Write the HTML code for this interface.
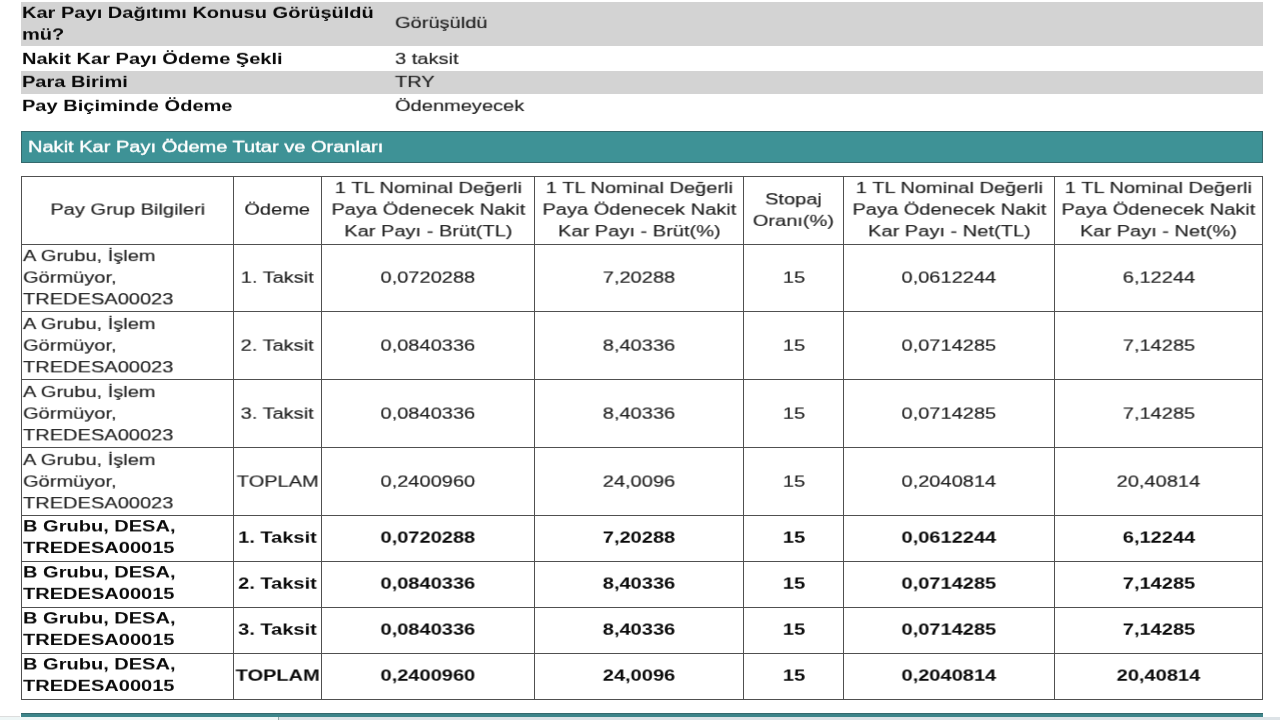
<!DOCTYPE html>
<html><head><meta charset="utf-8"><style>
html,body{margin:0;padding:0;background:#fff;}
body{width:1280px;height:720px;overflow:hidden;position:relative;font-family:"Liberation Sans",sans-serif;font-size:16px;color:#222;}
.bg{position:absolute;}
body{-webkit-font-smoothing:antialiased;}
.tl,.t{will-change:transform;-webkit-text-stroke:0.15px currentColor;}
.tl{position:absolute;white-space:nowrap;transform:scale(1.2525,0.94);}
.cell{position:absolute;display:flex;align-items:center;}
.t{white-space:nowrap;line-height:22.798px;transform:scale(1.2525,0.94);}
</style></head><body>
<div class="bg" style="left:20.5px;top:2px;width:1242.5px;height:44px;background:#d3d3d3"></div>
<div class="bg" style="left:20.5px;top:71px;width:1242.5px;height:23px;background:#d3d3d3"></div>
<div class="tl " style="left:21.9px;top:0.61px;line-height:23.298px;transform-origin:0 17.193px;font-weight:bold;-webkit-text-stroke:0;color:#0a0a0a">Kar Payı Dağıtımı Konusu Görüşüldü<br>mü?</div>
<div class="tl " style="left:394.6px;top:11.96px;line-height:22.798px;transform-origin:0 16.943px;color:#222">Görüşüldü</div>
<div class="tl " style="left:21.9px;top:48.36px;line-height:22.798px;transform-origin:0 16.943px;font-weight:bold;-webkit-text-stroke:0;color:#0a0a0a">Nakit Kar Payı Ödeme Şekli</div>
<div class="tl " style="left:394.6px;top:48.36px;line-height:22.798px;transform-origin:0 16.943px;color:#222">3 taksit</div>
<div class="tl " style="left:21.9px;top:70.96px;line-height:22.798px;transform-origin:0 16.943px;font-weight:bold;-webkit-text-stroke:0;color:#0a0a0a">Para Birimi</div>
<div class="tl " style="left:394.6px;top:70.96px;line-height:22.798px;transform-origin:0 16.943px;color:#222">TRY</div>
<div class="tl " style="left:21.9px;top:94.66px;line-height:22.798px;transform-origin:0 16.943px;font-weight:bold;-webkit-text-stroke:0;color:#0a0a0a">Pay Biçiminde Ödeme</div>
<div class="tl " style="left:394.6px;top:94.66px;line-height:22.798px;transform-origin:0 16.943px;color:#222">Ödenmeyecek</div>
<div class="bg" style="left:20.5px;top:131px;width:1242.5px;height:31.5px;background:#3e9296;box-shadow:inset 0 0 0 1px #35696d"></div>
<div class="tl " style="left:27.8px;top:135.96px;line-height:22.798px;transform-origin:0 16.943px;color:#fff;-webkit-text-stroke:0.4px #fff">Nakit Kar Payı Ödeme Tutar ve Oranları</div>
<div class="bg" style="left:21px;top:176px;width:1px;height:524px;background:#505050"></div>
<div class="bg" style="left:233px;top:176px;width:1px;height:524px;background:#505050"></div>
<div class="bg" style="left:321px;top:176px;width:1px;height:524px;background:#505050"></div>
<div class="bg" style="left:534px;top:176px;width:1px;height:524px;background:#505050"></div>
<div class="bg" style="left:743px;top:176px;width:1px;height:524px;background:#505050"></div>
<div class="bg" style="left:843px;top:176px;width:1px;height:524px;background:#505050"></div>
<div class="bg" style="left:1054px;top:176px;width:1px;height:524px;background:#505050"></div>
<div class="bg" style="left:1262px;top:176px;width:1px;height:524px;background:#505050"></div>
<div class="bg" style="left:21px;top:176px;width:1242px;height:1px;background:#505050"></div>
<div class="bg" style="left:21px;top:244px;width:1242px;height:1px;background:#505050"></div>
<div class="bg" style="left:21px;top:311px;width:1242px;height:1px;background:#505050"></div>
<div class="bg" style="left:21px;top:379px;width:1242px;height:1px;background:#505050"></div>
<div class="bg" style="left:21px;top:447px;width:1242px;height:1px;background:#505050"></div>
<div class="bg" style="left:21px;top:515px;width:1242px;height:1px;background:#505050"></div>
<div class="bg" style="left:21px;top:561px;width:1242px;height:1px;background:#505050"></div>
<div class="bg" style="left:21px;top:607px;width:1242px;height:1px;background:#505050"></div>
<div class="bg" style="left:21px;top:653px;width:1242px;height:1px;background:#505050"></div>
<div class="bg" style="left:21px;top:699px;width:1242px;height:1px;background:#505050"></div>
<div class="cell" style="left:22.0px;top:177px;width:211px;height:67px;justify-content:center"><div class="t" style="text-align:center;transform-origin:50% 50%">Pay Grup Bilgileri</div></div>
<div class="cell" style="left:234.0px;top:177px;width:87px;height:67px;justify-content:center"><div class="t" style="text-align:center;transform-origin:50% 50%">Ödeme</div></div>
<div class="cell" style="left:322.0px;top:177px;width:212px;height:67px;justify-content:center"><div class="t" style="text-align:center;transform-origin:50% 50%">1 TL Nominal Değerli<br>Paya Ödenecek Nakit<br>Kar Payı - Brüt(TL)</div></div>
<div class="cell" style="left:535.0px;top:177px;width:208px;height:67px;justify-content:center"><div class="t" style="text-align:center;transform-origin:50% 50%">1 TL Nominal Değerli<br>Paya Ödenecek Nakit<br>Kar Payı - Brüt(%)</div></div>
<div class="cell" style="left:744.0px;top:177px;width:99px;height:67px;justify-content:center"><div class="t" style="text-align:center;transform-origin:50% 50%">Stopaj<br>Oranı(%)</div></div>
<div class="cell" style="left:844.0px;top:177px;width:210px;height:67px;justify-content:center"><div class="t" style="text-align:center;transform-origin:50% 50%">1 TL Nominal Değerli<br>Paya Ödenecek Nakit<br>Kar Payı - Net(TL)</div></div>
<div class="cell" style="left:1055.0px;top:177px;width:207px;height:67px;justify-content:center"><div class="t" style="text-align:center;transform-origin:50% 50%">1 TL Nominal Değerli<br>Paya Ödenecek Nakit<br>Kar Payı - Net(%)</div></div>
<div class="cell" style="left:23.0px;top:245.2px;width:211px;height:66.0px;justify-content:flex-start"><div class="t" style="text-align:left;transform-origin:0 50%">A Grubu, İşlem<br>Görmüyor,<br>TREDESA00023</div></div>
<div class="cell" style="left:234.0px;top:245.9px;width:87px;height:65.99999999999997px;justify-content:center"><div class="t" style="text-align:center;transform-origin:50% 50%">1. Taksit</div></div>
<div class="cell" style="left:322.0px;top:245.9px;width:212px;height:65.99999999999997px;justify-content:center"><div class="t" style="text-align:center;transform-origin:50% 50%">0,0720288</div></div>
<div class="cell" style="left:535.0px;top:245.9px;width:208px;height:65.99999999999997px;justify-content:center"><div class="t" style="text-align:center;transform-origin:50% 50%">7,20288</div></div>
<div class="cell" style="left:744.0px;top:245.9px;width:99px;height:65.99999999999997px;justify-content:center"><div class="t" style="text-align:center;transform-origin:50% 50%">15</div></div>
<div class="cell" style="left:844.0px;top:245.9px;width:210px;height:65.99999999999997px;justify-content:center"><div class="t" style="text-align:center;transform-origin:50% 50%">0,0612244</div></div>
<div class="cell" style="left:1055.0px;top:245.9px;width:207px;height:65.99999999999997px;justify-content:center"><div class="t" style="text-align:center;transform-origin:50% 50%">6,12244</div></div>
<div class="cell" style="left:23.0px;top:312.2px;width:211px;height:67.0px;justify-content:flex-start"><div class="t" style="text-align:left;transform-origin:0 50%">A Grubu, İşlem<br>Görmüyor,<br>TREDESA00023</div></div>
<div class="cell" style="left:234.0px;top:312.9px;width:87px;height:67.0px;justify-content:center"><div class="t" style="text-align:center;transform-origin:50% 50%">2. Taksit</div></div>
<div class="cell" style="left:322.0px;top:312.9px;width:212px;height:67.0px;justify-content:center"><div class="t" style="text-align:center;transform-origin:50% 50%">0,0840336</div></div>
<div class="cell" style="left:535.0px;top:312.9px;width:208px;height:67.0px;justify-content:center"><div class="t" style="text-align:center;transform-origin:50% 50%">8,40336</div></div>
<div class="cell" style="left:744.0px;top:312.9px;width:99px;height:67.0px;justify-content:center"><div class="t" style="text-align:center;transform-origin:50% 50%">15</div></div>
<div class="cell" style="left:844.0px;top:312.9px;width:210px;height:67.0px;justify-content:center"><div class="t" style="text-align:center;transform-origin:50% 50%">0,0714285</div></div>
<div class="cell" style="left:1055.0px;top:312.9px;width:207px;height:67.0px;justify-content:center"><div class="t" style="text-align:center;transform-origin:50% 50%">7,14285</div></div>
<div class="cell" style="left:23.0px;top:380.2px;width:211px;height:67.0px;justify-content:flex-start"><div class="t" style="text-align:left;transform-origin:0 50%">A Grubu, İşlem<br>Görmüyor,<br>TREDESA00023</div></div>
<div class="cell" style="left:234.0px;top:380.9px;width:87px;height:67.0px;justify-content:center"><div class="t" style="text-align:center;transform-origin:50% 50%">3. Taksit</div></div>
<div class="cell" style="left:322.0px;top:380.9px;width:212px;height:67.0px;justify-content:center"><div class="t" style="text-align:center;transform-origin:50% 50%">0,0840336</div></div>
<div class="cell" style="left:535.0px;top:380.9px;width:208px;height:67.0px;justify-content:center"><div class="t" style="text-align:center;transform-origin:50% 50%">8,40336</div></div>
<div class="cell" style="left:744.0px;top:380.9px;width:99px;height:67.0px;justify-content:center"><div class="t" style="text-align:center;transform-origin:50% 50%">15</div></div>
<div class="cell" style="left:844.0px;top:380.9px;width:210px;height:67.0px;justify-content:center"><div class="t" style="text-align:center;transform-origin:50% 50%">0,0714285</div></div>
<div class="cell" style="left:1055.0px;top:380.9px;width:207px;height:67.0px;justify-content:center"><div class="t" style="text-align:center;transform-origin:50% 50%">7,14285</div></div>
<div class="cell" style="left:23.0px;top:448.2px;width:211px;height:67.00000000000006px;justify-content:flex-start"><div class="t" style="text-align:left;transform-origin:0 50%">A Grubu, İşlem<br>Görmüyor,<br>TREDESA00023</div></div>
<div class="cell" style="left:234.0px;top:448.9px;width:87px;height:67.0px;justify-content:center"><div class="t" style="text-align:center;transform-origin:50% 50%">TOPLAM</div></div>
<div class="cell" style="left:322.0px;top:448.9px;width:212px;height:67.0px;justify-content:center"><div class="t" style="text-align:center;transform-origin:50% 50%">0,2400960</div></div>
<div class="cell" style="left:535.0px;top:448.9px;width:208px;height:67.0px;justify-content:center"><div class="t" style="text-align:center;transform-origin:50% 50%">24,0096</div></div>
<div class="cell" style="left:744.0px;top:448.9px;width:99px;height:67.0px;justify-content:center"><div class="t" style="text-align:center;transform-origin:50% 50%">15</div></div>
<div class="cell" style="left:844.0px;top:448.9px;width:210px;height:67.0px;justify-content:center"><div class="t" style="text-align:center;transform-origin:50% 50%">0,2040814</div></div>
<div class="cell" style="left:1055.0px;top:448.9px;width:207px;height:67.0px;justify-content:center"><div class="t" style="text-align:center;transform-origin:50% 50%">20,40814</div></div>
<div class="cell" style="left:23.0px;top:515.7px;width:211px;height:45.0px;justify-content:flex-start"><div class="t" style="font-weight:bold;-webkit-text-stroke:0;color:#0a0a0a;text-align:left;transform-origin:0 50%">B Grubu, DESA,<br>TREDESA00015</div></div>
<div class="cell" style="left:234.0px;top:516.2px;width:87px;height:45.0px;justify-content:center"><div class="t" style="font-weight:bold;-webkit-text-stroke:0;color:#0a0a0a;text-align:center;transform-origin:50% 50%">1. Taksit</div></div>
<div class="cell" style="left:322.0px;top:516.2px;width:212px;height:45.0px;justify-content:center"><div class="t" style="font-weight:bold;-webkit-text-stroke:0;color:#0a0a0a;text-align:center;transform-origin:50% 50%">0,0720288</div></div>
<div class="cell" style="left:535.0px;top:516.2px;width:208px;height:45.0px;justify-content:center"><div class="t" style="font-weight:bold;-webkit-text-stroke:0;color:#0a0a0a;text-align:center;transform-origin:50% 50%">7,20288</div></div>
<div class="cell" style="left:744.0px;top:516.2px;width:99px;height:45.0px;justify-content:center"><div class="t" style="font-weight:bold;-webkit-text-stroke:0;color:#0a0a0a;text-align:center;transform-origin:50% 50%">15</div></div>
<div class="cell" style="left:844.0px;top:516.2px;width:210px;height:45.0px;justify-content:center"><div class="t" style="font-weight:bold;-webkit-text-stroke:0;color:#0a0a0a;text-align:center;transform-origin:50% 50%">0,0612244</div></div>
<div class="cell" style="left:1055.0px;top:516.2px;width:207px;height:45.0px;justify-content:center"><div class="t" style="font-weight:bold;-webkit-text-stroke:0;color:#0a0a0a;text-align:center;transform-origin:50% 50%">6,12244</div></div>
<div class="cell" style="left:23.0px;top:561.7px;width:211px;height:45.0px;justify-content:flex-start"><div class="t" style="font-weight:bold;-webkit-text-stroke:0;color:#0a0a0a;text-align:left;transform-origin:0 50%">B Grubu, DESA,<br>TREDESA00015</div></div>
<div class="cell" style="left:234.0px;top:562.2px;width:87px;height:45.0px;justify-content:center"><div class="t" style="font-weight:bold;-webkit-text-stroke:0;color:#0a0a0a;text-align:center;transform-origin:50% 50%">2. Taksit</div></div>
<div class="cell" style="left:322.0px;top:562.2px;width:212px;height:45.0px;justify-content:center"><div class="t" style="font-weight:bold;-webkit-text-stroke:0;color:#0a0a0a;text-align:center;transform-origin:50% 50%">0,0840336</div></div>
<div class="cell" style="left:535.0px;top:562.2px;width:208px;height:45.0px;justify-content:center"><div class="t" style="font-weight:bold;-webkit-text-stroke:0;color:#0a0a0a;text-align:center;transform-origin:50% 50%">8,40336</div></div>
<div class="cell" style="left:744.0px;top:562.2px;width:99px;height:45.0px;justify-content:center"><div class="t" style="font-weight:bold;-webkit-text-stroke:0;color:#0a0a0a;text-align:center;transform-origin:50% 50%">15</div></div>
<div class="cell" style="left:844.0px;top:562.2px;width:210px;height:45.0px;justify-content:center"><div class="t" style="font-weight:bold;-webkit-text-stroke:0;color:#0a0a0a;text-align:center;transform-origin:50% 50%">0,0714285</div></div>
<div class="cell" style="left:1055.0px;top:562.2px;width:207px;height:45.0px;justify-content:center"><div class="t" style="font-weight:bold;-webkit-text-stroke:0;color:#0a0a0a;text-align:center;transform-origin:50% 50%">7,14285</div></div>
<div class="cell" style="left:23.0px;top:607.7px;width:211px;height:45.0px;justify-content:flex-start"><div class="t" style="font-weight:bold;-webkit-text-stroke:0;color:#0a0a0a;text-align:left;transform-origin:0 50%">B Grubu, DESA,<br>TREDESA00015</div></div>
<div class="cell" style="left:234.0px;top:608.2px;width:87px;height:45.0px;justify-content:center"><div class="t" style="font-weight:bold;-webkit-text-stroke:0;color:#0a0a0a;text-align:center;transform-origin:50% 50%">3. Taksit</div></div>
<div class="cell" style="left:322.0px;top:608.2px;width:212px;height:45.0px;justify-content:center"><div class="t" style="font-weight:bold;-webkit-text-stroke:0;color:#0a0a0a;text-align:center;transform-origin:50% 50%">0,0840336</div></div>
<div class="cell" style="left:535.0px;top:608.2px;width:208px;height:45.0px;justify-content:center"><div class="t" style="font-weight:bold;-webkit-text-stroke:0;color:#0a0a0a;text-align:center;transform-origin:50% 50%">8,40336</div></div>
<div class="cell" style="left:744.0px;top:608.2px;width:99px;height:45.0px;justify-content:center"><div class="t" style="font-weight:bold;-webkit-text-stroke:0;color:#0a0a0a;text-align:center;transform-origin:50% 50%">15</div></div>
<div class="cell" style="left:844.0px;top:608.2px;width:210px;height:45.0px;justify-content:center"><div class="t" style="font-weight:bold;-webkit-text-stroke:0;color:#0a0a0a;text-align:center;transform-origin:50% 50%">0,0714285</div></div>
<div class="cell" style="left:1055.0px;top:608.2px;width:207px;height:45.0px;justify-content:center"><div class="t" style="font-weight:bold;-webkit-text-stroke:0;color:#0a0a0a;text-align:center;transform-origin:50% 50%">7,14285</div></div>
<div class="cell" style="left:23.0px;top:653.7px;width:211px;height:45.0px;justify-content:flex-start"><div class="t" style="font-weight:bold;-webkit-text-stroke:0;color:#0a0a0a;text-align:left;transform-origin:0 50%">B Grubu, DESA,<br>TREDESA00015</div></div>
<div class="cell" style="left:234.0px;top:654.2px;width:87px;height:45.0px;justify-content:center"><div class="t" style="font-weight:bold;-webkit-text-stroke:0;color:#0a0a0a;text-align:center;transform-origin:50% 50%">TOPLAM</div></div>
<div class="cell" style="left:322.0px;top:654.2px;width:212px;height:45.0px;justify-content:center"><div class="t" style="font-weight:bold;-webkit-text-stroke:0;color:#0a0a0a;text-align:center;transform-origin:50% 50%">0,2400960</div></div>
<div class="cell" style="left:535.0px;top:654.2px;width:208px;height:45.0px;justify-content:center"><div class="t" style="font-weight:bold;-webkit-text-stroke:0;color:#0a0a0a;text-align:center;transform-origin:50% 50%">24,0096</div></div>
<div class="cell" style="left:744.0px;top:654.2px;width:99px;height:45.0px;justify-content:center"><div class="t" style="font-weight:bold;-webkit-text-stroke:0;color:#0a0a0a;text-align:center;transform-origin:50% 50%">15</div></div>
<div class="cell" style="left:844.0px;top:654.2px;width:210px;height:45.0px;justify-content:center"><div class="t" style="font-weight:bold;-webkit-text-stroke:0;color:#0a0a0a;text-align:center;transform-origin:50% 50%">0,2040814</div></div>
<div class="cell" style="left:1055.0px;top:654.2px;width:207px;height:45.0px;justify-content:center"><div class="t" style="font-weight:bold;-webkit-text-stroke:0;color:#0a0a0a;text-align:center;transform-origin:50% 50%">20,40814</div></div>
<div class="bg" style="left:20.5px;top:713px;width:1242.5px;height:4px;background:#3d858a;box-shadow:inset 0 1px 0 #35696d"></div>
<div class="bg" style="left:0;top:716px;width:20px;height:1px;background:#ddd"></div>
<div class="bg" style="left:0;top:717px;width:278px;height:3px;background:#eef6f6"></div>
<div class="bg" style="left:278px;top:717px;width:1002px;height:3px;background:#dde3e7;box-shadow:inset 1px 0 0 #9aa"></div>
</body></html>
